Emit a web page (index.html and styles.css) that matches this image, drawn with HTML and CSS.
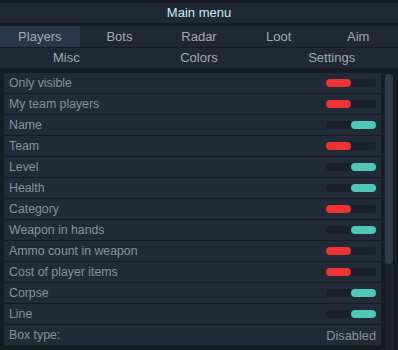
FILE: index.html
```html
<!DOCTYPE html>
<html>
<head>
<meta charset="utf-8">
<link rel="stylesheet" href="styles.css">
</head>
<body>
<div class="app">
  <div class="title">Main menu</div>
  <div class="tabs tabs5">
    <div class="tab active">Players</div>
    <div class="tab">Bots</div>
    <div class="tab">Radar</div>
    <div class="tab">Loot</div>
    <div class="tab">Aim</div>
  </div>
  <div class="tabs tabs3">
    <div class="tab">Misc</div>
    <div class="tab">Colors</div>
    <div class="tab">Settings</div>
  </div>
  <div class="content">
    <div class="list">
      <div class="row"><span>Only visible</span><span class="tog off"><i></i></span></div>
      <div class="row"><span>My team players</span><span class="tog off"><i></i></span></div>
      <div class="row"><span>Name</span><span class="tog on"><i></i></span></div>
      <div class="row"><span>Team</span><span class="tog off"><i></i></span></div>
      <div class="row"><span>Level</span><span class="tog on"><i></i></span></div>
      <div class="row"><span>Health</span><span class="tog on"><i></i></span></div>
      <div class="row"><span>Category</span><span class="tog off"><i></i></span></div>
      <div class="row"><span>Weapon in hands</span><span class="tog on"><i></i></span></div>
      <div class="row"><span>Ammo count in weapon</span><span class="tog off"><i></i></span></div>
      <div class="row"><span>Cost of player items</span><span class="tog off"><i></i></span></div>
      <div class="row"><span>Corpse</span><span class="tog on"><i></i></span></div>
      <div class="row"><span>Line</span><span class="tog on"><i></i></span></div>
      <div class="row"><span>Box type:</span><span class="val">Disabled</span></div>
    </div>
    <div class="scroll"><div class="thumb"></div></div>
  </div>
</div>
</body>
</html>
```
FILE: styles.css
```css
html, body {
  margin: 0;
  padding: 0;
  background: #161c24;
  width: 398px;
  height: 350px;
  overflow: hidden;
}
.app {
  font-family: "Liberation Sans", Arial, sans-serif;
  font-size: 13px;
  color: #9aa1a9;
  display: flex;
  flex-direction: column;
  height: 350px;
}
.title {
  height: 20px;
  margin-top: 3px;
  background: #1f2833;
  color: #c6eef0;
  text-align: center;
  line-height: 20px;
}
.tabs {
  display: grid;
  background: #1f2833;
}
.tabs5 {
  grid-template-columns: repeat(5, 1fr);
  margin-top: 3px;
  border-bottom: 1px solid #151b22;
}
.tabs3 {
  grid-template-columns: repeat(3, 1fr);
}
.tab {
  height: 20px;
  line-height: 20px;
  text-align: center;
  color: #a3aab2;
}
.tabs5 .tab { height: 21px; line-height: 21px; }
.tab.active {
  background: #283747;
}
.content {
  display: flex;
  margin-top: 5px;
  padding-left: 4px;
  gap: 4px;
  flex: 1;
  min-height: 0;
}
.list {
  flex: 1;
  display: flex;
  flex-direction: column;
  font-size: 12.3px;
}
.row {
  height: 20px;
  border-bottom: 1px solid #161c24;
  background: #212a37;
  display: flex;
  align-items: center;
  justify-content: space-between;
  padding: 0 5px 0 5px;
  flex-shrink: 0;
  color: #8a9199;
}
.tog {
  width: 50px;
  height: 8px;
  border-radius: 4px;
  background: #1a212b;
  display: flex;
}
.tog i {
  width: 25px;
  height: 8px;
  border-radius: 4px;
}
.tog.off i { background: #ee3333; }
.tog.on { justify-content: flex-end; }
.tog.on i { background: #4ec9b5; }
.val { color: #8a9199; font-size: 12.8px; }
.scroll {
  width: 8px;
  margin-right: 5px;
  margin-top: 1px;
  background: #1b222c;
}
.thumb {
  height: 190px;
  background: #2e3a48;
  border-radius: 4px;
}
```
